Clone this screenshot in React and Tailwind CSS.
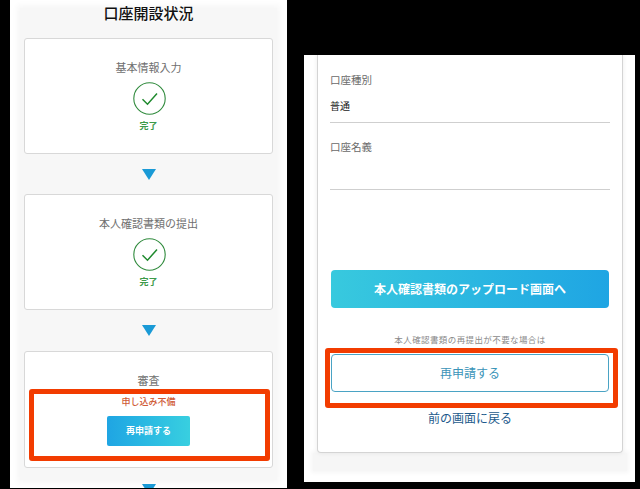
import React from "react";

const font = { fontFamily: '"Noto Sans CJK JP", "Noto Sans", sans-serif' };

function Check() {
  return (
    <svg width="33" height="33" viewBox="0 0 33 33" fill="none" className="block">
      <circle cx="16.5" cy="16.5" r="15.7" stroke="#2f8a3c" strokeWidth="1.1" />
      <path d="M9.5 17.2l5 5L24 11.5" stroke="#1f8a2e" strokeWidth="1.5" />
    </svg>
  );
}

function Arrow({ className }) {
  return (
    <div className={`flex items-center justify-center ${className}`}>
      <div className="h-0 w-0 border-x-[7px] border-t-[11px] border-x-transparent border-t-[#1a9ad6]" />
    </div>
  );
}

function DoneCard({ title, className }) {
  return (
    <div className={`flex flex-col items-center rounded-[3px] border border-[#d8d8d8] bg-white pt-[20px] ${className}`}>
      <div className="text-[11px] leading-[16px] text-[#6f6f6f]">{title}</div>
      <div className="ml-[1px] mt-[7px]"><Check /></div>
      <div className="mt-[4px] text-[9px] font-bold leading-[14px] text-[#3d9a4a]">完了</div>
    </div>
  );
}

export default function App() {
  return (
    <div style={font} className="flex h-[489px] w-[640px] items-start bg-black">
      <div className="ml-[10px] h-[488px] w-[277px] overflow-hidden bg-white px-[10px] pt-[8px]">
        <div className="relative h-[472px] bg-[#f7f7f7] px-[4px] shadow-[0_0_6px_3px_#f7f7f7]">
          <div className="flex h-[30px] items-center justify-center">
            <h1 className="mb-[21px] text-[15px] font-medium leading-[20px] text-[#111] [text-shadow:0_0_4px_#fff]">口座開設状況</h1>
          </div>
          <DoneCard title="基本情報入力" className="h-[116px]" />
          <Arrow className="h-[40px]" />
          <DoneCard title="本人確認書類の提出" className="h-[116px]" />
          <Arrow className="h-[41px]" />
          <div className="relative flex h-[117px] flex-col items-center rounded-[3px] border border-[#d8d8d8] bg-white pt-[20px]">
            <div className="text-[11px] leading-[16px] text-[#6f6f6f]">審査</div>
            <div className="mt-[7px] text-[9px] font-medium leading-[14px] text-[#cf5a36]">申し込み不備</div>
            <button className="mt-[7px] h-[30px] w-[83px] rounded-[2px] bg-linear-to-r from-[#1fa5e3] to-[#38cfe0] text-[9px] font-bold text-white">再申請する</button>
            <div className="absolute left-[4px] top-[37px] h-[72px] w-[241px] rounded-[3px] border-[5px] border-[#f23c00]" />
          </div>
          <Arrow className="mt-[16px]" />
        </div>
      </div>

      <div className="ml-[17px] mt-[55px] h-[427px] w-[331px] bg-white pl-[13px] pr-[12px]">
        <div className="relative h-[398px] rounded-b-[4px] border-x border-b border-[#d4d4d4] bg-white px-[12px] pt-[17px] shadow-[0_0_5px_rgba(0,0,0,0.08)]">
          <div className="text-[10.5px] leading-[16px] text-[#6a6a6a]">口座種別</div>
          <div className="mt-[10px] border-b border-[#cfcfcf] pb-[8px] text-[10px] leading-[16px] text-[#222]">普通</div>
          <div className="mt-[16px] text-[10.5px] leading-[16px] text-[#6a6a6a]">口座名義</div>
          <div className="mt-[18px] h-[17px] border-b border-[#cfcfcf]" />
          <button className="mt-[80px] ml-[1px] block h-[38px] w-[278px] rounded-[4px] bg-linear-to-r from-[#38c9de] to-[#1fa5e3] text-[12px] font-bold text-white">本人確認書類のアップロード画面へ</button>
          <p className="mt-[25px] ml-[1px] w-[278px] text-center text-[8.5px] leading-[12px] tracking-[0.4px] text-[#8a8a8a]">本人確認書類の再提出が不要な場合は</p>
          <button className="mt-[9px] ml-[1px] block h-[38px] w-[278px] rounded-[4px] border border-[#4aa3c4] bg-white text-[12px] text-[#3a94b8]">再申請する</button>
          <p className="mt-[17px] text-center text-[12px] leading-[18px] text-[#1d5a8c]">前の画面に戻る</p>
          <div className="absolute left-[7px] top-[293px] h-[60px] w-[293px] rounded-[3px] border-[5px] border-[#f23c00]" />
        </div>
        <div className="mx-[-4px] h-[18px] bg-[#f6f6f6] shadow-[0_0_4px_2px_#f6f6f6]" />
      </div>
    </div>
  );
}
